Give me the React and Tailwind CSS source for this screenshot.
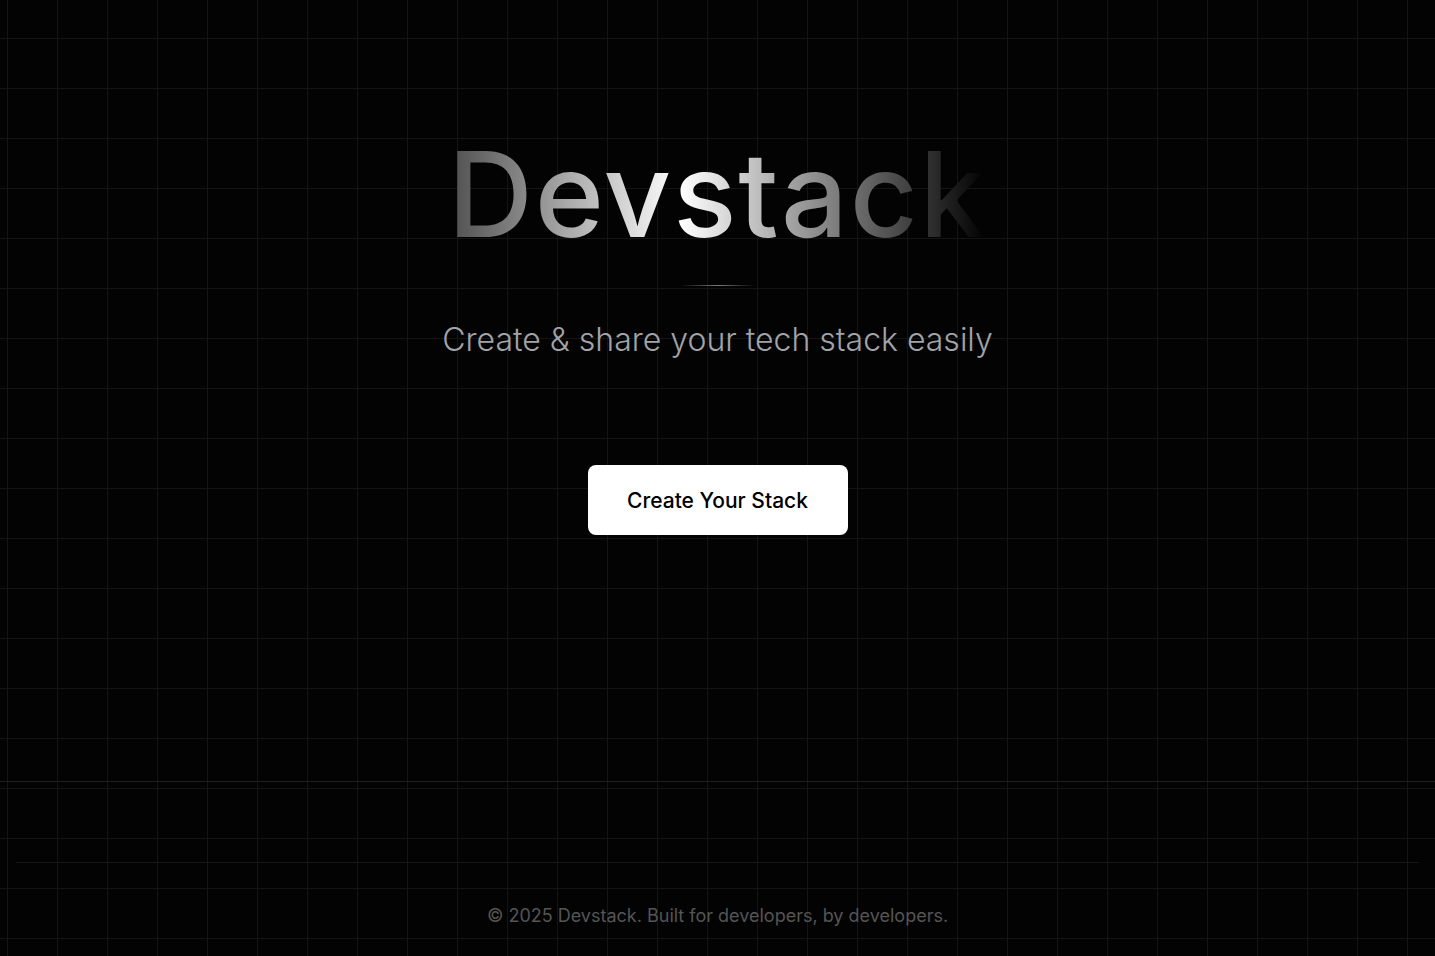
import React from "react";

function Hero() {
  return (
    <section className="flex flex-col items-center pt-[118px] h-[781px]">
      <h1 className="text-[118px] leading-[1.3] font-medium tracking-[0.015em] bg-[linear-gradient(to_right,#4e4e4e_0%,#ffffff_43%,#000000_100%)] bg-clip-text text-transparent">
        Devstack
      </h1>
      <div className="mt-[14px] h-px w-[74px] bg-[linear-gradient(to_right,transparent,#7a7a7a,transparent)]" />
      <p className="mt-[30px] text-[32px] leading-[48px] font-light text-[#a1a3a8]">
        Create &amp; share your tech stack easily
      </p>
      <button className="mt-[101px] w-[260px] h-[70px] rounded-lg bg-white text-black text-[21px] font-medium">
        Create Your Stack
      </button>
    </section>
  );
}

function Footer() {
  return (
    <footer className="border-t border-[#1f1f1f] pt-[80px]">
      <div className="mx-4 border-t border-[#161616] pt-[39px] pb-[30px] text-center">
        <p className="text-[18px] text-[#555555]">
          © 2025 Devstack. Built for developers, by developers.
        </p>
      </div>
    </footer>
  );
}

export default function App() {
  return (
    <div className="min-h-screen bg-[#030303] bg-[linear-gradient(to_right,#141414_1px,transparent_1px),linear-gradient(to_bottom,#141414_1px,transparent_1px)] bg-[size:50px_50px] bg-[position:7px_38px] font-['Inter',sans-serif] overflow-hidden">
      <Hero />
      <Footer />
    </div>
  );
}
